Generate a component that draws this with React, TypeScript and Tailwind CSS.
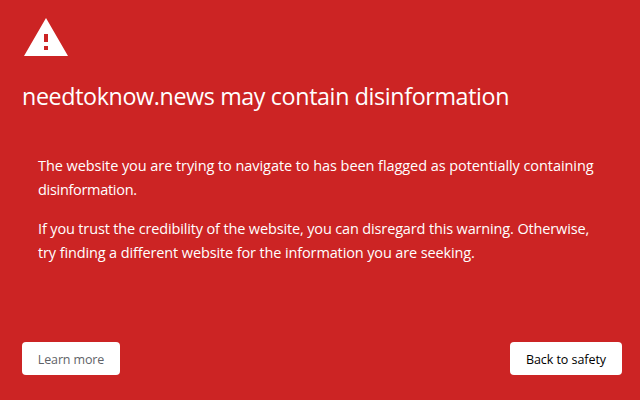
export default function App() {
  return (
    <main className="flex h-[400px] w-[640px] flex-col overflow-hidden bg-[#cc2424] pr-[18px] pl-[22px] pt-[18px] pb-[25px] font-['Open_Sans','Noto_Sans',sans-serif] text-white">
      <svg className="ml-[2px] h-[38px] w-[44px] shrink-0" viewBox="0 0 44 38" fill="currentColor" aria-hidden="true">
        <path fillRule="evenodd" d="M22 0 44 38H0ZM20 16v8h4v-8Zm0 12v4h4v-4Z" />
      </svg>
      <h1 className="mt-[22px] whitespace-nowrap text-[23.25px] leading-9 tracking-[-0.36px]">
        <span>needtoknow.news may contain disinformation</span>
      </h1>
      <section className="mt-[40px] flex flex-col gap-[15px] whitespace-nowrap px-4 text-[14.5px] leading-6">
        <p>
          <span className="tracking-[-0.065px]">The website you are trying to navigate to has been flagged as potentially containing</span>
          <br />
          <span className="tracking-[-0.3px]">disinformation.</span>
        </p>
        <p>
          <span className="tracking-[-0.145px]">If you trust the credibility of the website, you can disregard this warning. Otherwise,</span>
          <br />
          <span className="tracking-[-0.125px]">try finding a different website for the information you are seeking.</span>
        </p>
      </section>
      <footer className="mt-auto flex justify-between whitespace-nowrap text-[12.5px]">
        <button className="h-[33px] w-[98px] rounded-[4px] bg-white pt-[3px] tracking-[-0.13px] text-[#5f6368]">Learn more</button>
        <button className="h-[33px] w-[112px] rounded-[4px] bg-white pt-[3px] tracking-[-0.05px] text-black">Back to safety</button>
      </footer>
    </main>
  );
}
